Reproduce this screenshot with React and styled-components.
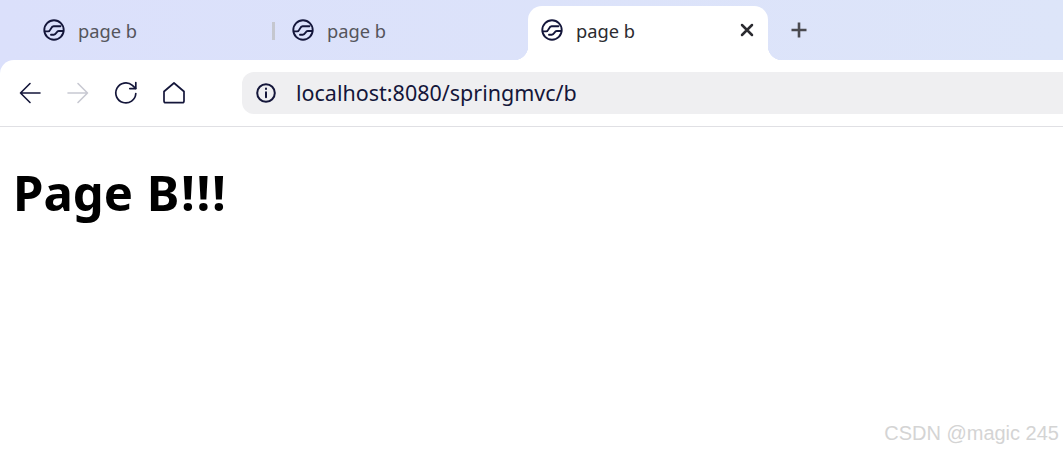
import React from 'react';
import styled, { createGlobalStyle } from 'styled-components';

const GlobalStyle = createGlobalStyle`
    html, body {
        margin: 0;
        padding: 0;
        background: #ffffff;
        font-family: "Noto Sans", "Open Sans", sans-serif;
    }
`;

function GlobeIcon() {
    return (
        <svg width="22" height="22" viewBox="0 0 22 22" fill="none" stroke="#14163a" strokeWidth="1.9" strokeLinecap="round" strokeLinejoin="round">
            <circle cx="11" cy="11" r="9.7" />
            <path d="M1.8 12.4H5.2C8 12.4 7.6 7.2 10.6 7.2H17.4" />
            <path d="M20.2 12H15.8C13.2 12 13.6 15.8 10.8 15.8H8" />
        </svg>
    );
}

export default function App() {
    return (
        <Page>
            <GlobalStyle />
            <TabStrip>
                <Tab>
                    <GlobeIcon />
                    <TabTitle>page b</TabTitle>
                </Tab>
                <Separator />
                <Tab>
                    <GlobeIcon />
                    <TabTitle>page b</TabTitle>
                </Tab>
                <ActiveTab>
                    <GlobeIcon />
                    <TabTitle $active>page b</TabTitle>
                    <CloseButton>
                        <svg width="14" height="14" viewBox="0 0 14 14" stroke="#2b2b30" strokeWidth="2.5" strokeLinecap="round">
                            <path d="M2 2l10 10M12 2L2 12" />
                        </svg>
                    </CloseButton>
                </ActiveTab>
                <NewTab>
                    <svg width="18" height="18" viewBox="0 0 18 18" stroke="#4a4a50" strokeWidth="2.6">
                        <path d="M9 1.5v15M1.5 9h15" />
                    </svg>
                </NewTab>
            </TabStrip>

            <ToolbarBack>
                <Toolbar>
                    <NavButtons>
                        <NavButton>
                            <svg width="24" height="24" viewBox="0 0 24 24" fill="none" stroke="#14163a" strokeWidth="1.6" strokeLinecap="round" strokeLinejoin="round">
                                <path d="M22 12H2.5M12 2.5L2.5 12l9.5 9.5" />
                            </svg>
                        </NavButton>
                        <NavButton>
                            <svg width="24" height="24" viewBox="0 0 24 24" fill="none" stroke="#c8c9d2" strokeWidth="1.6" strokeLinecap="round" strokeLinejoin="round">
                                <path d="M2 12h19.5M12 2.5l9.5 9.5-9.5 9.5" />
                            </svg>
                        </NavButton>
                        <NavButton>
                            <svg width="24" height="24" viewBox="0 0 24 24" fill="none" stroke="#14163a" strokeWidth="1.7" strokeLinecap="round" strokeLinejoin="round">
                                <path d="M21.8 12.5A10 10 0 1 1 18.4 4.4L21.6 7.4" />
                                <path d="M21.8 1.5V7.6H15.8" />
                            </svg>
                        </NavButton>
                        <NavButton>
                            <svg width="24" height="24" viewBox="0 0 24 24" fill="none" stroke="#14163a" strokeWidth="1.7" strokeLinecap="round" strokeLinejoin="round">
                                <path d="M12 2L2 10.5V20c0 1 .7 1.7 1.7 1.7h16.6c1 0 1.7-.7 1.7-1.7v-9.5L12 2z" />
                            </svg>
                        </NavButton>
                    </NavButtons>
                    <AddressBar>
                        <svg width="22" height="22" viewBox="0 0 22 22" fill="none" stroke="#14163a" strokeWidth="2" strokeLinecap="round">
                            <circle cx="11" cy="11" r="8.8" />
                            <path d="M11 10.2v5" />
                            <path d="M11 6.6v.4" />
                        </svg>
                        <Url>localhost:8080/springmvc/b</Url>
                    </AddressBar>
                </Toolbar>
            </ToolbarBack>

            <Content>
                <Heading>Page <Marks>B!!!</Marks></Heading>
                <Watermark>CSDN @magic 245</Watermark>
            </Content>
        </Page>
    );
}

// STYLES //

const Page = styled.div`
    width: 1063px;
    height: 451px;
    overflow: hidden;
    display: flex;
    flex-direction: column;
    background: #ffffff;
`;

const TabStrip = styled.div`
    height: 60px;
    display: flex;
    align-items: stretch;
    padding: 6px 0 0 43px;
    box-sizing: border-box;
    background: linear-gradient(90deg, #dbe0fb 0%, #dde5f9 100%);
`;

const Tab = styled.div`
    width: 229px;
    display: flex;
    align-items: center;
    gap: 13px;
    padding-bottom: 6px;
    box-sizing: border-box;
`;

const Separator = styled.div`
    width: 3px;
    height: 18px;
    margin: 16px 17px 0 0;
    background: #c5c7cf;
`;

const ActiveTab = styled.div`
    position: relative;
    width: 240px;
    margin-left: 7px;
    padding: 0 14px 6px 13px;
    display: flex;
    align-items: center;
    gap: 13px;
    box-sizing: border-box;
    background: #ffffff;
    border-radius: 14px 14px 0 0;

    &::before,
    &::after {
        content: '';
        position: absolute;
        bottom: 0;
        width: 14px;
        height: 14px;
    }

    &::before {
        left: -14px;
        background: radial-gradient(circle at 0 0, transparent 14px, #ffffff 14.5px);
    }

    &::after {
        right: -14px;
        background: radial-gradient(circle at 100% 0, transparent 14px, #ffffff 14.5px);
    }
`;

const TabTitle = styled.span`
    flex: 1;
    font-size: 18.3px;
    line-height: 24px;
    padding-top: 1px;
    color: ${props => (props.$active ? '#2b2b30' : '#55555c')};
`;

const CloseButton = styled.div`
    display: flex;
`;

const NewTab = styled.div`
    display: flex;
    align-items: center;
    margin-left: 22px;
    padding-bottom: 6px;
`;

const ToolbarBack = styled.div`
    background: #dbe0fb;
`;

const Toolbar = styled.div`
    height: 67px;
    display: flex;
    align-items: center;
    padding-left: 18px;
    box-sizing: border-box;
    background: #ffffff;
    border-top-left-radius: 14px;
    border-bottom: 1px solid #e0e0e4;
`;

const NavButtons = styled.div`
    width: 224px;
    display: flex;
    gap: 24px;
`;

const NavButton = styled.div`
    display: flex;
`;

const AddressBar = styled.div`
    flex: 1;
    height: 42px;
    margin-bottom: 1px;
    display: flex;
    align-items: center;
    gap: 19px;
    padding-left: 13px;
    background: #efeff1;
    border-radius: 12px 0 0 12px;
`;

const Url = styled.span`
    font-size: 21.5px;
    color: #14163a;
`;

const Content = styled.div`
    position: relative;
    flex: 1;
    padding: 32px 0 0 13px;
`;

const Heading = styled.h1`
    margin: 0;
    font-size: 49px;
    line-height: 66px;
    font-weight: 700;
    word-spacing: 1px;
    color: #000000;
`;

const Marks = styled.span`
    letter-spacing: 1.7px;
`;

const Watermark = styled.div`
    position: absolute;
    right: 4px;
    bottom: 6px;
    font-family: "Liberation Sans", Arial, sans-serif;
    font-size: 20px;
    color: #d4d4d4;
`;
